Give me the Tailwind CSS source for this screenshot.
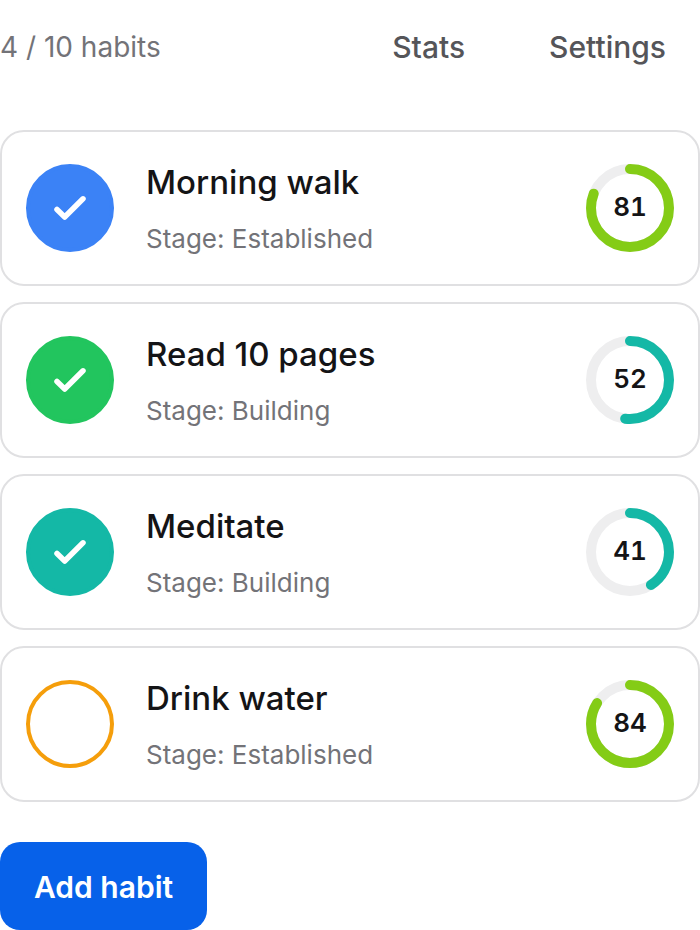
<!DOCTYPE html>
<html lang="en">
<head>
  <meta charset="UTF-8" />
  <meta name="viewport" content="width=device-width, initial-scale=1" />
  <title>Habits</title>
  <script src="https://cdn.jsdelivr.net/npm/@tailwindcss/browser@4"></script>
</head>
<body class="bg-white font-['Inter',sans-serif] text-[#141416]">
  <header class="flex items-center justify-between pt-3 pr-[34px] mb-12">
    <p class="text-[28px] leading-[70px] text-[#737378]">4 / 10 habits</p>
    <nav class="flex gap-[84px] text-[30px] leading-[70px] font-medium text-[#555559]">
      <a href="#stats">Stats</a>
      <a href="#settings">Settings</a>
    </nav>
  </header>

  <ul id="habits" class="flex flex-col gap-4"></ul>

  <button class="mt-10 h-[88px] px-[34px] pt-0.5 rounded-[20px] bg-[#0761e9] text-[30px] font-semibold text-white">Add habit</button>

  <script>
    const habits = [
      { name: 'Morning walk', stage: 'Established', score: 81, color: '#3b82f6', ring: '#84cc16', done: true },
      { name: 'Read 10 pages', stage: 'Building', score: 52, color: '#22c55e', ring: '#14b8a6', done: true },
      { name: 'Meditate', stage: 'Building', score: 41, color: '#14b8a6', ring: '#14b8a6', done: true },
      { name: 'Drink water', stage: 'Established', score: 84, color: '#f59e0b', ring: '#84cc16', done: false },
    ];

    document.getElementById('habits').innerHTML = habits.map(h => `
      <li class="flex items-center gap-8 h-[156px] px-6 border-2 border-[#e0e0e2] rounded-[24px]">
        <button aria-label="Toggle ${h.name}" aria-pressed="${h.done}" class="flex items-center justify-center size-[88px] shrink-0 rounded-full border-4" style="border-color: ${h.color}; background: ${h.done ? h.color : 'transparent'}">
          ${h.done ? '<svg class="size-10" viewBox="0 0 40 40" fill="none" stroke="#fff" stroke-width="5.5" stroke-linecap="round" stroke-linejoin="round"><path d="M7 21.5l7.7 7.5L33 10.8" /></svg>' : ''}
        </button>
        <div class="flex-1 pt-0.5">
          <h2 class="text-[33px] leading-[44px] font-medium">${h.name}</h2>
          <p class="mt-4 text-[26px] leading-[38px] text-[#737378]">Stage: ${h.stage}</p>
        </div>
        <div class="relative size-[88px] shrink-0">
          <svg class="size-full -rotate-90" viewBox="0 0 88 88" fill="none" stroke-width="10">
            <circle cx="44" cy="44" r="39" stroke="#eeeeef" />
            <circle cx="44" cy="44" r="39" stroke="${h.ring}" stroke-linecap="round" pathLength="100" stroke-dasharray="${h.score} 100" />
          </svg>
          <span class="absolute inset-0 flex items-center justify-center pb-1 text-[26px] font-semibold tabular-nums">${h.score}</span>
        </div>
      </li>`).join('');
  </script>
</body>
</html>
